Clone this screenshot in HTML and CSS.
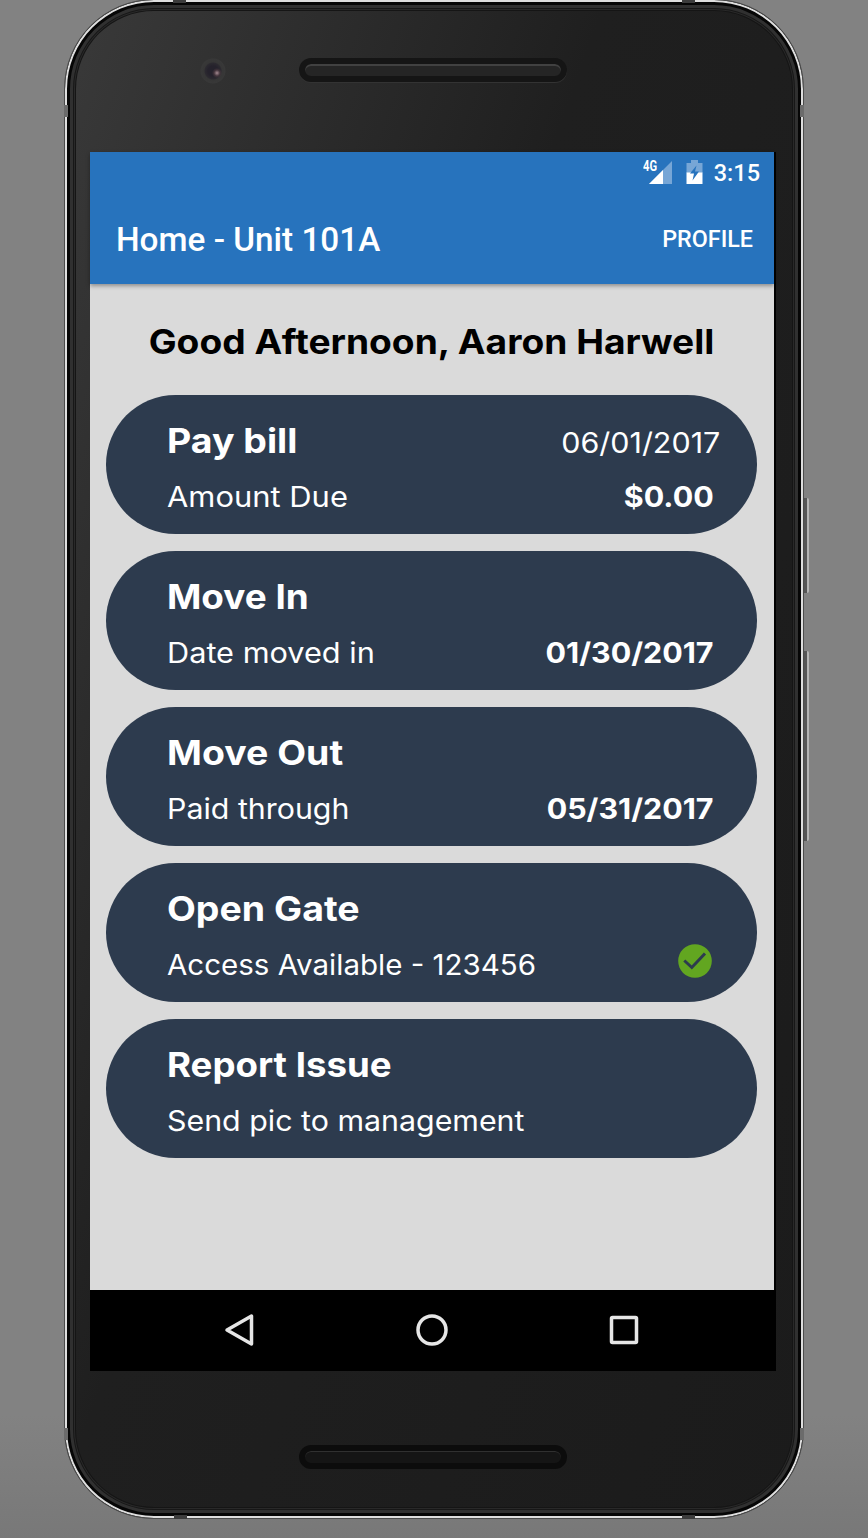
FILE: index.html
```html
<!DOCTYPE html>
<html lang="en">
<head>
  <meta charset="UTF-8" />
  <title>Home - Unit 101A</title>
  <meta name="viewport" content="width=device-width, initial-scale=1" />
  <link rel="stylesheet" href="styles.css">
</head>
<body>

  <div class="phone">
    <span class="band band-tl"></span>
    <span class="band band-tr"></span>
    <span class="band band-bl"></span>
    <span class="band band-br"></span>
    <span class="band side side-tl"></span>
    <span class="band side side-tr"></span>
    <span class="band side side-bl"></span>
    <span class="band side side-br"></span>
    <span class="hw-button power"></span>
    <span class="hw-button volume"></span>
    <span class="camera"></span>

    <div class="bezel bezel-top"><div class="speaker"></div></div>

    <div class="screen">
      <header>
        <div class="status-bar">
          <svg class="signal" width="30" height="26" viewBox="0 0 30 26">
            <path d="M29 2v23H6z" fill="#77a6d6" />
            <path d="M20 11v14H6z" fill="#fff" />
            <path d="M0 0h16v11l-5 3H0z" fill="#2773bd" />
            <text x="0" y="11.500" textLength="14" lengthAdjust="spacingAndGlyphs" class="network">4G</text>
          </svg>
          <svg class="battery" width="17" height="26" viewBox="0 0 17 26">
            <path d="M5 1h7v3h4.500v10H.5V4H5z" fill="#77a6d6" />
            <path d="M.5 13.500h16V25H.5z" fill="#fff" />
            <path d="M10.500 6.500L4 14.500h4l-1.500 7 6.500-9H9z" fill="#2773bd" />
          </svg>
          <span class="clock">3:15</span>
        </div>
        <div class="app-bar">
          <h1>Home - Unit 101A</h1>
          <a class="profile">PROFILE</a>
        </div>
      </header>

      <main>
        <h2>Good Afternoon, Aaron Harwell</h2>

        <div class="card">
          <div class="row"><h3 class="pay">Pay bill</h3><span class="date">06/01/2017</span></div>
          <div class="row"><p class="due">Amount Due</p><b>$0.00</b></div>
        </div>
        <div class="card">
          <div class="row"><h3 class="move-in">Move In</h3></div>
          <div class="row"><p class="moved">Date moved in</p><b>01/30/2017</b></div>
        </div>
        <div class="card">
          <div class="row"><h3 class="move-out">Move Out</h3></div>
          <div class="row"><p class="paid">Paid through</p><b>05/31/2017</b></div>
        </div>
        <div class="card">
          <div class="row"><h3 class="gate">Open Gate</h3></div>
          <div class="row">
            <p class="access">Access Available - 123456</p>
            <svg class="check" width="34" height="34" viewBox="0 0 34 34">
              <circle cx="17" cy="17" r="16.800" fill="#62a620" />
              <path d="M6.300 16.500l7.500 7L27 9.500" fill="none" stroke="#2d3b4e" stroke-width="3" />
            </svg>
          </div>
        </div>
        <div class="card">
          <div class="row"><h3 class="report">Report Issue</h3></div>
          <div class="row"><p class="send">Send pic to management</p></div>
        </div>
      </main>

      <nav>
        <svg width="32" height="34" viewBox="0 0 32 34">
          <path d="M27.500 3v28L3 17z" />
        </svg>
        <svg width="34" height="34" viewBox="0 0 34 34">
          <circle cx="17" cy="17" r="14" />
        </svg>
        <svg width="32" height="34" viewBox="0 0 32 34">
          <rect x="3.500" y="4.500" width="25" height="25" rx="1" />
        </svg>
      </nav>
    </div>

    <div class="bezel bezel-bottom"><div class="speaker"></div></div>
  </div>

</body>
</html>
```
FILE: styles.css
```css
:root {
  --blue: #2773bd;
  --card: #2d3b4e;
  --bg: #dadada;
}
* {
  margin: 0;
  padding: 0;
  box-sizing: border-box;
}
body {
  font-family: Inter, sans-serif;
  background: linear-gradient(#828282 92%, #787878);
  height: 1538px;
  padding-left: 64px;
  overflow: hidden;
}
.phone {
  position: relative;
  width: 740px;
  height: 1520px;
  margin-top: -1px;
  padding-left: 25px;
  border: 1px solid #4b4b4b;
  border-radius: 90px;
  background: linear-gradient(110deg, #3a3a3a 0%, #1f1f1f 42%, #1b1b1b 100%);
  box-shadow: inset 0 0 0 2px #dedede, inset 0 0 0 5px #060606, inset 0 0 0 8px #303030, inset 0 0 0 9px #171717, inset 0 0 0 10px #292929, inset 0 0 0 11px #151515;
}
.band {
  position: absolute;
  width: 13px;
  height: 4px;
  background: #3c3c3c;
}
.band-tl { left: 108px; top: -1px; }
.band-tr { right: 108px; top: -1px; }
.band-bl { left: 109px; bottom: -1px; }
.band-br { right: 108px; bottom: -1px; }
.side {
  width: 4px;
  height: 12px;
  background: #6b6b6b;
}
.side-tl { left: -1px; top: 105px; }
.side-tr { right: -1px; top: 105px; }
.side-bl { left: -1px; bottom: 78px; }
.side-br { right: -1px; bottom: 78px; }
.hw-button {
  position: absolute;
  right: -6px;
  width: 5px;
  background: #555;
  border-right: 2px solid #b4b4b4;
  border-radius: 0 2px 2px 0;
}
.power { top: 498px; height: 95px; }
.volume { top: 651px; height: 190px; }
.camera {
  position: absolute;
  left: 134px;
  top: 57px;
  width: 27px;
  height: 27px;
  border-radius: 50%;
  background:
    radial-gradient(circle at 18px 16px, #a58a92 0, rgba(73,56,63,0.8) 3px, transparent 5px),
    radial-gradient(circle at 14px 14px, #25222c 5px, #2c2a30 8px, #363636 9px, #383838 12px, #323232 13px);
}
.bezel {
  width: 686px;
  display: flex;
  justify-content: center;
}
.bezel-top { height: 152px; padding-top: 58px; }
.bezel-bottom { padding-top: 74px; }
.speaker {
  width: 268px;
  height: 24px;
  border-radius: 12px;
  border: 6px solid #151515;
  background: #252525;
  box-shadow: inset 0 2px 0 #414141, 0 1px 0 #333;
}
.bezel-bottom .speaker {
  border-color: #0c0c0c;
  background: #151515;
  box-shadow: inset 0 1px 0 #303030;
}
.screen {
  width: 686px;
  height: 1219px;
  background: #000;
}
header {
  position: relative;
  width: 684px;
  height: 132px;
  background: var(--blue);
  color: #fff;
  font-family: Roboto, sans-serif;
  box-shadow: 0 2px 4px rgba(0,0,0,0.35);
}
.status-bar {
  height: 42px;
  display: flex;
  align-items: center;
  justify-content: flex-end;
  padding-right: 14px;
}
.network {
  font-size: 14.500px;
  font-weight: 700;
  fill: #fff;
}
.signal {
  margin-right: 13px;
  margin-bottom: 2px;
}
.battery {
  margin-right: 11px;
  margin-bottom: 2px;
}
.clock {
  font-size: 23.500px;
  font-weight: 500;
}
.app-bar {
  height: 90px;
  display: flex;
  align-items: center;
  justify-content: space-between;
  padding: 0 21px 0 26px;
}
h1 {
  font-size: 33.300px;
  font-weight: 500;
}
.profile {
  font-size: 23.300px;
  font-weight: 500;
}
main {
  width: 684px;
  height: 1005.500px;
  padding: 0 17px 0 16px;
  background: var(--bg);
}
h2 {
  height: 111px;
  padding-top: 35px;
  line-height: 46px;
  font-size: 34px;
  font-weight: 700;
  text-align: center;
  white-space: nowrap;
  transform: scaleX(1.093);
}
.card {
  height: 139px;
  margin-bottom: 17.100px;
  padding: 19px 43px 0 61px;
  border-radius: 70px;
  background: var(--card);
  color: #fff;
}
.row {
  height: 55px;
  display: flex;
  align-items: center;
  justify-content: space-between;
  white-space: nowrap;
}
h3 {
  margin-top: -2px;
  font-size: 34px;
  font-weight: 700;
}
p, b, .date {
  font-size: 28px;
}
/* widen the letterforms */
h3, p {
  transform-origin: left;
}
b, .date {
  transform: scaleX(1.087);
  transform-origin: right;
}
.date {
  margin-top: 2px;
  margin-right: -6px;
}
.pay { transform: scaleX(1.102); }
.move-in { transform: scaleX(1.085); }
.move-out, .gate { transform: scaleX(1.102); }
.report { transform: scaleX(1.077); }
.due { transform: scaleX(1.104); }
.moved { transform: scaleX(1.096); }
.paid, .send { transform: scaleX(1.084); }
.access { transform: scaleX(1.054); }
.check {
  margin-right: 2px;
  margin-bottom: 7px;
}
nav {
  height: 81px;
  display: flex;
  align-items: center;
  justify-content: space-between;
  padding: 0 136px 0 134px;
}
nav svg {
  fill: none;
  stroke: #e6e6e6;
  stroke-width: 3.500;
  stroke-linejoin: round;
}
```
